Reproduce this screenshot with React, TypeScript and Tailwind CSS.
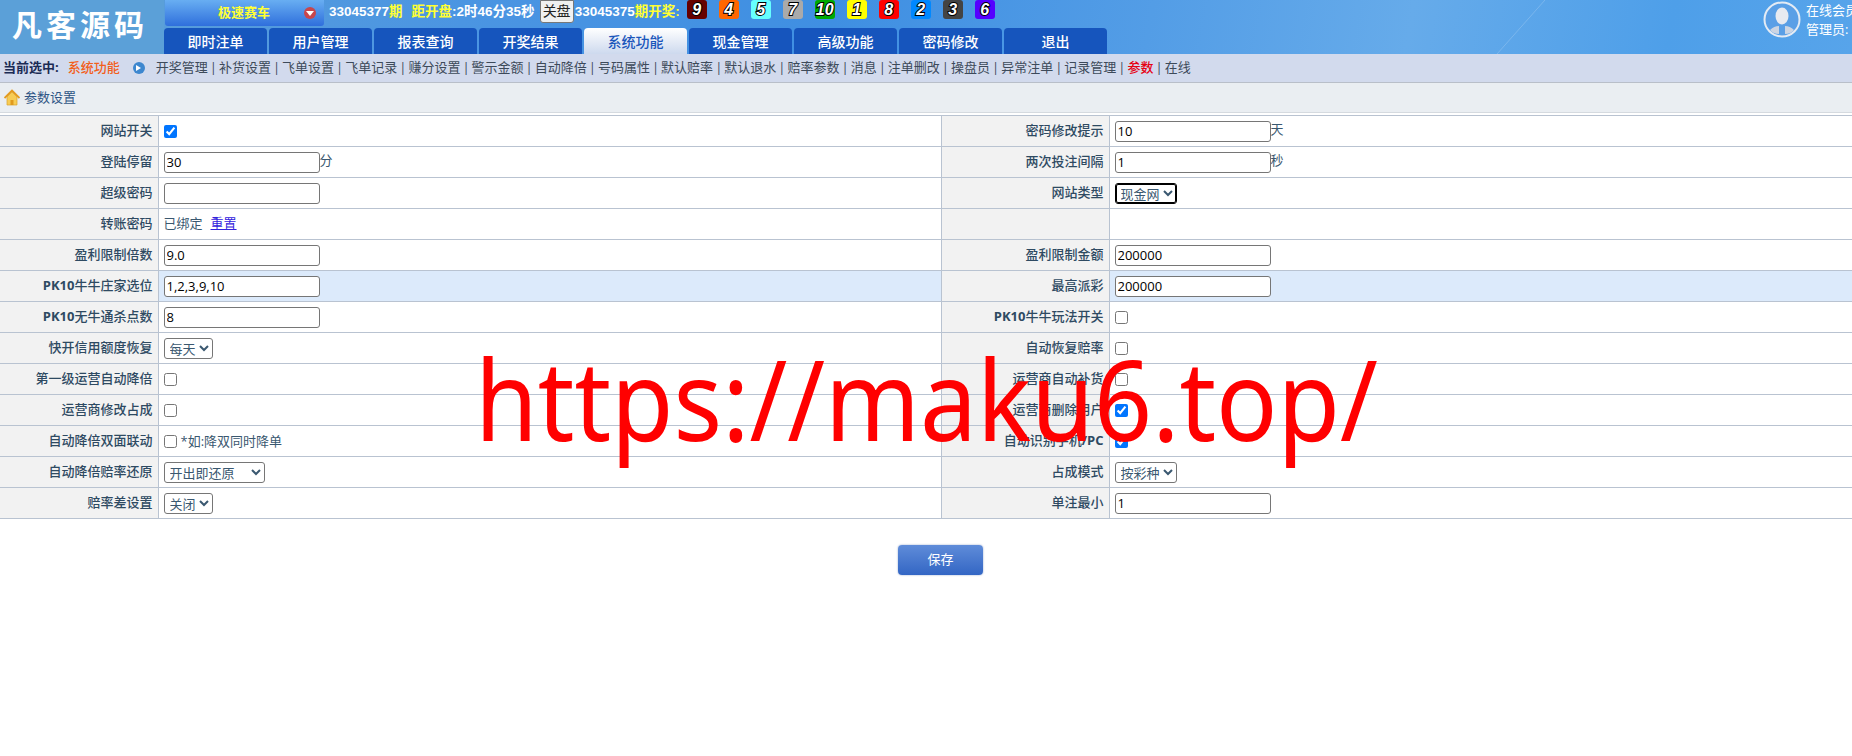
import type { ReactNode } from "react";

const balls = [
  { n: 9, c: "bg-[#660000]" },
  { n: 4, c: "bg-[#ff6600]" },
  { n: 5, c: "bg-[#66ffff]" },
  { n: 7, c: "bg-[#aaaaaa]" },
  { n: 10, c: "bg-[#00aa00]" },
  { n: 1, c: "bg-[#ffff00]" },
  { n: 8, c: "bg-[#ff0000]" },
  { n: 2, c: "bg-[#0088ff]" },
  { n: 3, c: "bg-[#444444]" },
  { n: 6, c: "bg-[#5500ff]" },
];

const tabs = ["即时注单", "用户管理", "报表查询", "开奖结果", "系统功能", "现金管理", "高级功能", "密码修改", "退出"];

const subLinks = ["开奖管理", "补货设置", "飞单设置", "飞单记录", "赚分设置", "警示金额", "自动降倍", "号码属性", "默认赔率", "默认退水", "赔率参数", "消息", "注单删改", "操盘员", "异常注单", "记录管理", "参数", "在线"];

function TextInput({ value = "" }: { value?: string }) {
  return (
    <input
      type="text"
      defaultValue={value}
      className="w-[156px] h-[21px] px-[2px] align-middle bg-white border border-[#767676] rounded-[3px] text-[13px] text-black outline-none"
    />
  );
}

function Check({ on = false }: { on?: boolean }) {
  return <input type="checkbox" defaultChecked={on} className="w-[13px] h-[13px] m-0 align-middle" />;
}

function Pick({ value, className }: { value: string; className: string }) {
  return (
    <select defaultValue={value} className={`h-[21px] align-middle bg-white border border-[#767676] rounded-[3px] text-[13px] text-[#3a5870] pl-[1px] ${className}`}>
      <option>{value}</option>
    </select>
  );
}

function Row({ label, value, label2, value2, hot }: { label: ReactNode; value: ReactNode; label2?: ReactNode; value2?: ReactNode; hot?: boolean }) {
  const bg = hot ? "bg-[#dceafb]" : "bg-white";
  const head = "bg-[#f2f2f2] text-right pr-[5px] font-medium text-[#2e4a62] border-r border-[#b9c3d1]";
  return (
    <tr className="h-[31px] border-b border-[#b9c3d1]">
      <td className={head}>{label}</td>
      <td className={`${bg} pl-[5px] text-[#3a5870] border-r border-[#b9c3d1]`}>{value}</td>
      <td className={head}>{label2}</td>
      <td className={`${bg} pl-[5px] text-[#3a5870]`}>{value2}</td>
    </tr>
  );
}

export default function App() {
  return (
    <div className="relative h-screen overflow-hidden bg-white font-['Open_Sans','Noto_Sans_CJK_SC',sans-serif] text-[13px]">
      {/* Header */}
      <div className="relative flex h-[54px] overflow-hidden bg-[linear-gradient(100deg,#5da0d8_0%,#4b95e2_25%,#3f8fe2_45%,#539de6_62%,#66abea_76%,#4e9fe9_90%,#57a4ea_100%)]">
        <svg className="absolute right-[307px] top-0" width="48" height="54" viewBox="0 0 48 54">
          <path d="M0 54 L48 0" stroke="#8fc2f0" strokeWidth="1" opacity="0.6" />
        </svg>
        <div className="w-[164px] shrink-0 bg-[#5ba0d8] pl-[12px] pt-[7px] text-[30px] leading-[36px] font-bold tracking-[4px] text-white whitespace-nowrap">
          凡客源码
        </div>
        <div className="relative flex flex-col justify-between">
          <div className="flex items-start h-[26px] font-['Liberation_Sans','Noto_Sans_CJK_SC',sans-serif] text-[13.5px] font-bold text-white whitespace-nowrap">
            <div className="flex items-center w-[159px] h-[26px] ml-px rounded-b-[3px] bg-[linear-gradient(#68aef2,#2f6fdc)] text-[13px] text-[#ffff33]">
              <span className="ml-[53px]">极速赛车</span>
              <span className="flex items-center justify-center ml-[34px] w-[12px] h-[12px] rounded-full bg-[#c8464c]">
                <span className="border-x-[4px] border-x-transparent border-t-[5px] border-t-white"></span>
              </span>
            </div>
            <div className="ml-[5px] leading-[24px]">
              33045377<span className="text-[#ffff33]">期</span>
              <span className="ml-[9px] text-[#ffff33]">距开盘</span>:2时46分35秒
            </div>
            <button className="ml-[5px] mr-px w-[34px] h-[23px] bg-[#f0f0f0] border border-[#777] rounded-b-[3px] text-[14px] font-normal text-[#222]">关盘</button>
            <div className="leading-[24px]">
              33045375<span className="text-[#ffff33]">期开奖:</span>
            </div>
            <div className="ml-[7px] flex gap-[12px]">
              {balls.map((b) => (
                <span
                  key={b.n}
                  className={`flex items-center justify-center w-[20px] h-[19px] rounded-[3px] ${b.c} text-[16px] leading-none italic font-bold text-white [-webkit-text-stroke:2px_#000] [paint-order:stroke_fill]`}
                >
                  {b.n}
                </span>
              ))}
            </div>
          </div>
          <div className="flex gap-[2px] h-[26px]">
            {tabs.map((t) => (
              <div
                key={t}
                className={
                  t === "系统功能"
                    ? "w-[103px] flex items-center justify-center rounded-t-[4px] bg-[linear-gradient(#ffffff,#cdd9ee)] text-[14px] font-medium text-[#1a56bb]"
                    : "w-[103px] flex items-center justify-center rounded-t-[4px] bg-[#1655bd] text-[14px] font-medium text-white"
                }
              >
                {t}
              </div>
            ))}
          </div>
        </div>
        <div className="absolute left-[1763px] top-px flex">
          <svg width="38" height="37" viewBox="0 0 38 37">
            <ellipse cx="19" cy="18.5" rx="17.5" ry="17" fill="#5a9fe6" stroke="#e4ebf4" strokeWidth="2" />
            <ellipse cx="19" cy="15" rx="6.5" ry="8.5" fill="#e8eaf0" />
            <path d="M7 29 Q11 25 16 25 L16 33 Q10 33 7 29 Z M31 29 Q27 25 22 25 L22 33 Q28 33 31 29 Z" fill="#ccd5e3" />
          </svg>
          <div className="ml-[5px] w-[46px] overflow-hidden whitespace-nowrap text-white text-[13px] leading-[19px]">
            在线会员
            <br />
            管理员:
          </div>
        </div>
      </div>

      {/* Sub nav */}
      <div className="flex items-center h-[29px] bg-[#d2daed] border-b border-[#b9bfc9] text-[#3d4a5a] whitespace-nowrap">
        <span className="ml-[3px] font-bold text-[#1b2b55]">当前选中:</span>
        <span className="ml-[9px] font-medium text-[#f2601c]">系统功能</span>
        <span className="flex items-center justify-center ml-[13px] w-[12px] h-[12px] rounded-full bg-[#3d87cf]">
          <span className="border-y-[3px] border-y-transparent border-l-[5px] border-l-white"></span>
        </span>
        <div className="ml-[11px]">
          {subLinks.map((s, i) => (
            <span key={s}>
              {i > 0 && <span className="mx-[2px]">|</span>}
              <span className={s === "参数" ? "font-medium text-[#e60012]" : ""}>{s}</span>
            </span>
          ))}
        </div>
      </div>

      {/* Crumb */}
      <div className="flex items-center h-[30px] bg-[#eaeef2] border-b border-[#d5dadf] pl-[4px] text-[#2f5585]">
        <svg width="16" height="17" viewBox="0 0 16 17">
          <path d="M3 8 V16 H13 V8 L8 3 Z" fill="#f7cc55" stroke="#d9a02c" strokeWidth="0.7" />
          <path d="M6.5 16 V11 H9.5 V16 Z" fill="#e09a1e" />
          <path d="M0.5 9 L8 1.5 L15.5 9" fill="none" stroke="#e39a1f" strokeWidth="1.8" />
        </svg>
        <span className="ml-[4px]">参数设置</span>
      </div>

      {/* Settings table */}
      <table className="mt-[2px] w-full table-fixed border-collapse border-t border-[#b9c3d1]">
        <colgroup>
          <col className="w-[158px]" />
          <col className="w-[783px]" />
          <col className="w-[168px]" />
          <col />
        </colgroup>
        <tbody>
          <Row label="网站开关" value={<Check on />} label2="密码修改提示" value2={<><TextInput value="10" />天</>} />
          <Row label="登陆停留" value={<><TextInput value="30" />分</>} label2="两次投注间隔" value2={<><TextInput value="1" />秒</>} />
          <Row label="超级密码" value={<TextInput />} label2="网站类型" value2={<Pick value="现金网" className="w-[62px] !border-black outline-1 -outline-offset-2 outline-black" />} />
          <Row label="转账密码" value={<>已绑定<a className="ml-[8px] text-[#3322dd] underline">重置</a></>} />
          <Row label="盈利限制倍数" value={<TextInput value="9.0" />} label2="盈利限制金额" value2={<TextInput value="200000" />} />
          <Row hot label={<><b>PK10</b>牛牛庄家选位</>} value={<TextInput value="1,2,3,9,10" />} label2="最高派彩" value2={<TextInput value="200000" />} />
          <Row label={<><b>PK10</b>无牛通杀点数</>} value={<TextInput value="8" />} label2={<><b>PK10</b>牛牛玩法开关</>} value2={<Check />} />
          <Row label="快开信用额度恢复" value={<Pick value="每天" className="w-[49px]" />} label2="自动恢复赔率" value2={<Check />} />
          <Row label="第一级运营自动降倍" value={<Check />} label2="运营商自动补货" value2={<Check />} />
          <Row label="运营商修改占成" value={<Check />} label2="运营商删除用户" value2={<Check on />} />
          <Row label="自动降倍双面联动" value={<><Check /><span className="ml-[4px] align-middle">*如:降双同时降单</span></>} label2={<>自动识别手机<b>/PC</b></>} value2={<Check on />} />
          <Row label="自动降倍赔率还原" value={<Pick value="开出即还原" className="w-[101px]" />} label2="占成模式" value2={<Pick value="按彩种" className="w-[62px]" />} />
          <Row label="赔率差设置" value={<Pick value="关闭" className="w-[49px]" />} label2="单注最小" value2={<TextInput value="1" />} />
        </tbody>
      </table>

      <div className="flex justify-center mt-[26px] ml-[29px]">
        <button className="w-[85px] h-[30px] rounded-[4px] bg-[linear-gradient(#5f8cd9,#3366c4)] text-white text-[13px] shadow-[0_0_2px_#8aa0c8]">保存</button>
      </div>

      {/* Watermark */}
      <div className="absolute left-[475px] top-[323px] origin-left scale-x-[0.907] text-[112px] leading-[150px] text-[#ff0000] font-['Noto_Sans',sans-serif] whitespace-nowrap pointer-events-none">
        https://maku6.top/
      </div>
    </div>
  );
}
